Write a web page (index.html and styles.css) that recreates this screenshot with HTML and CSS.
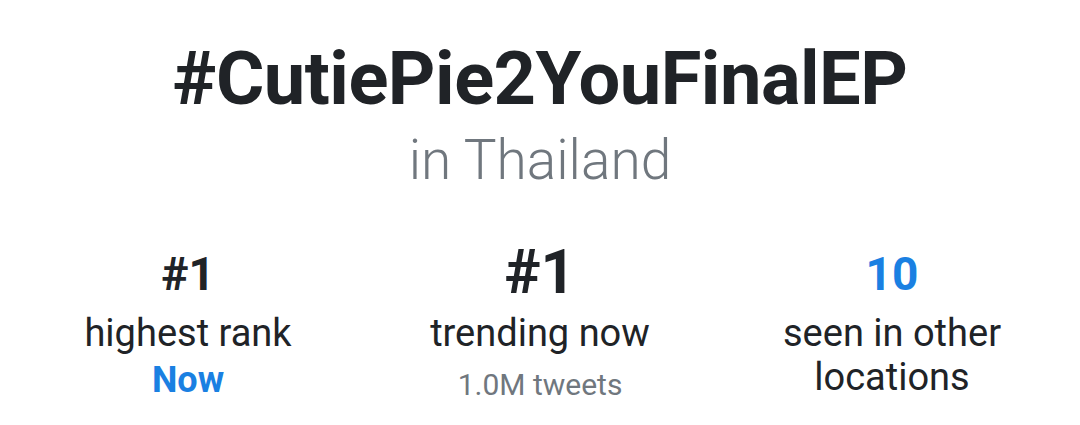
FILE: index.html
```html
<!DOCTYPE html>
<html>
<head>
<meta charset="utf-8">
<link rel="stylesheet" href="styles.css">
</head>
<body>
<main class="card">
  <h1 class="title">#CutiePie2YouFinalEP</h1>
  <p class="subtitle">in Thailand</p>
  <section class="stats">
    <div class="stat">
      <div class="value">#1</div>
      <div class="label">highest rank</div>
      <div class="extra accent">Now</div>
    </div>
    <div class="stat">
      <div class="value big">#1</div>
      <div class="label">trending now</div>
      <div class="extra muted">1.0M tweets</div>
    </div>
    <div class="stat">
      <div class="value accent">10</div>
      <div class="label">seen in other<br>locations</div>
    </div>
  </section>
</main>
</body>
</html>
```
FILE: styles.css
```css
html, body {
  margin: 0;
  padding: 0;
  background: #ffffff;
}
body {
  font-family: Roboto, "Liberation Sans", sans-serif;
  color: #202327;
  width: 1080px;
  height: 425px;
  overflow: hidden;
}
.card {
  padding: 35px 12px 0;
  text-align: center;
}
.title {
  margin: 0;
  font-size: 74px;
  font-weight: 700;
  line-height: 88px;
  letter-spacing: -0.5px;
}
.subtitle {
  margin: 0;
  font-size: 55px;
  font-weight: 300;
  line-height: 74px;
  color: #70777e;
}
.stats {
  display: grid;
  grid-template-columns: repeat(3, 1fr);
  margin-top: 47px;
}
.stat {
  display: flex;
  flex-direction: column;
  align-items: center;
}
.value {
  font-size: 46px;
  font-weight: 700;
  height: 67px;
  line-height: 60px;
}
.value.big {
  font-size: 61px;
  line-height: 56px;
}
.label {
  font-size: 38px;
  line-height: 44px;
}
.accent {
  color: #1a80e2;
}
.extra.accent {
  font-size: 36px;
  font-weight: 700;
  line-height: 50px;
}
.extra.muted {
  font-size: 30px;
  line-height: 60px;
  color: #70777e;
}
```
